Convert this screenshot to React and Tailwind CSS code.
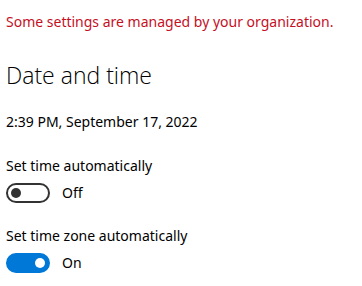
import React from 'react';

const Toggle = ({ on }) => (
  <div
    className={`w-[44px] h-[20px] rounded-full border-2 flex items-center px-[3px] ${
      on ? 'bg-[#0078d7] border-[#0078d7] justify-end' : 'bg-white border-[#333] justify-start'
    }`}
  >
    <div className={`w-[10px] h-[10px] rounded-full ${on ? 'bg-white' : 'bg-[#333]'}`} />
  </div>
);

const Setting = ({ label, on }) => (
  <div className="flex flex-col">
    <div className="text-[14px] leading-[20px]">{label}</div>
    <div className="flex items-center gap-[12px] mt-[7px]">
      <Toggle on={on} />
      <span className="text-[14px] leading-[20px]">{on ? 'On' : 'Off'}</span>
    </div>
  </div>
);

export default function App() {
  return (
    <div
      className="w-[362px] h-[286px] bg-white text-black pl-[6px] pt-[12px] overflow-hidden"
      style={{ fontFamily: '"Noto Sans", "Open Sans", sans-serif' }}
    >
      <div className="text-[14px] leading-[20px] text-[#c50f1f]">
        Some settings are managed by your organization.
      </div>
      <h1
        className="text-[23px] leading-[30px] font-light mt-[28px]"
        style={{ fontFamily: '"Open Sans", "Noto Sans", sans-serif' }}
      >
        Date and time
      </h1>
      <div className="text-[14px] leading-[20px] mt-[22px]">2:39 PM, September 17, 2022</div>
      <div className="flex flex-col gap-[23px] mt-[24px]">
        <Setting label="Set time automatically" on={false} />
        <Setting label="Set time zone automatically" on={true} />
      </div>
    </div>
  );
}
